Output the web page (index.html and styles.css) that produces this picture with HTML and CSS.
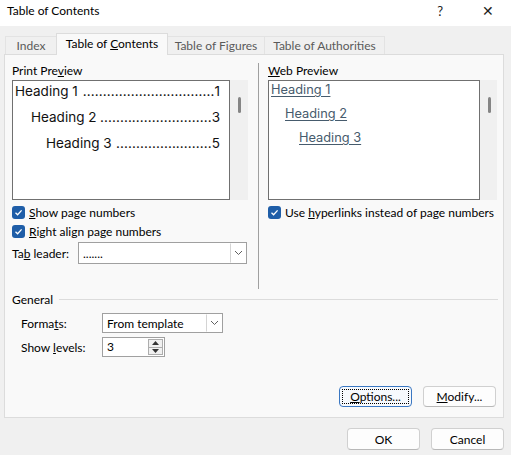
FILE: index.html
```html
<!DOCTYPE html>
<html lang="en">
<head>
    <meta charset="UTF-8">
    <title>Table of Contents</title>
    <link rel="stylesheet" href="styles.css">
</head>
<body>
    <div class="dialog">
        <div class="titlebar">
            <span class="title">Table of Contents</span>
            <span class="title-btn help">?</span>
            <span class="title-btn close">&#x2715;</span>
        </div>

        <div class="tabs">
            <div class="tab tab-index">Index</div>
            <div class="tab tab-active">Table of <u>C</u>ontents</div>
            <div class="tab tab-figures">Table of Figures</div>
            <div class="tab tab-auth">Table of Authorities</div>
        </div>

        <div class="panel">
            <div class="top-row">
                <!-- 인쇄 미리보기 -->
                <div class="col col-left">
                    <div class="label">Print Pre<u>v</u>iew</div>
                    <div class="preview-wrap">
                        <div class="preview print">
                            <div class="toc-line lvl1"><span>Heading 1</span><span class="dots">.................................</span><span>1</span></div>
                            <div class="toc-line lvl2"><span>Heading 2</span><span class="dots">............................</span><span>3</span></div>
                            <div class="toc-line lvl3"><span>Heading 3</span><span class="dots">........................</span><span>5</span></div>
                        </div>
                        <div class="scroll"><div class="thumb"></div></div>
                    </div>
                    <div class="check-row first">
                        <span class="check"><svg width="13" height="13" viewBox="0 0 13 13"><polyline points="3.5,6.8 5.6,8.8 9.6,4.4" fill="none" stroke="#fff" stroke-width="1.3"/></svg></span>
                        <span><u>S</u>how page numbers</span>
                    </div>
                    <div class="check-row">
                        <span class="check"><svg width="13" height="13" viewBox="0 0 13 13"><polyline points="3.5,6.8 5.6,8.8 9.6,4.4" fill="none" stroke="#fff" stroke-width="1.3"/></svg></span>
                        <span><u>R</u>ight align page numbers</span>
                    </div>
                    <div class="field-row leader-row">
                        <span class="leader-label">Ta<u>b</u> leader:</span>
                        <div class="select leader-select">
                            <span class="select-text">.......</span>
                            <span class="select-arrow"><svg width="9" height="6" viewBox="0 0 9 6"><polyline points="1,1 4.5,4.5 8,1" fill="none" stroke="#606060" stroke-width="1"/></svg></span>
                        </div>
                    </div>
                </div>

                <div class="vsep"></div>

                <!-- 웹 미리보기 -->
                <div class="col col-right">
                    <div class="label"><u>W</u>eb Preview</div>
                    <div class="preview-wrap">
                        <div class="preview web">
                            <div class="web-line lvl1">Heading 1</div>
                            <div class="web-line lvl2">Heading 2</div>
                            <div class="web-line lvl3">Heading 3</div>
                        </div>
                        <div class="scroll"><div class="thumb"></div></div>
                    </div>
                    <div class="check-row first">
                        <span class="check"><svg width="13" height="13" viewBox="0 0 13 13"><polyline points="3.5,6.8 5.6,8.8 9.6,4.4" fill="none" stroke="#fff" stroke-width="1.3"/></svg></span>
                        <span>Use <u>h</u>yperlinks instead of page numbers</span>
                    </div>
                </div>
            </div>

            <div class="group-head">
                <span>General</span>
                <div class="group-line"></div>
            </div>

            <div class="field-row formats-row">
                <span class="field-label">Forma<u>t</u>s:</span>
                <div class="select formats-select">
                    <span class="select-text">From template</span>
                    <span class="select-arrow"><svg width="9" height="6" viewBox="0 0 9 6"><polyline points="1,1 4.5,4.5 8,1" fill="none" stroke="#606060" stroke-width="1"/></svg></span>
                </div>
            </div>

            <div class="field-row levels-row">
                <span class="field-label">Show <u>l</u>evels:</span>
                <div class="spin">
                    <span class="spin-text">3</span>
                    <span class="spin-btns">
                        <span class="spin-btn"><svg width="7" height="4" viewBox="0 0 7 4"><polygon points="0,4 3.5,0 7,4" fill="#333"/></svg></span>
                        <span class="spin-btn"><svg width="7" height="4" viewBox="0 0 7 4"><polygon points="0,0 3.5,4 7,0" fill="#333"/></svg></span>
                    </span>
                </div>
            </div>

            <div class="btn-row">
                <button class="btn btn-focus"><span class="focus-ring"><u>O</u>ptions...</span></button>
                <button class="btn"><u>M</u>odify...</button>
            </div>
        </div>

        <div class="footer">
            <button class="btn btn-big">OK</button>
            <button class="btn btn-big">Cancel</button>
        </div>
    </div>
</body>
</html>
```

FILE: styles.css
```css
/* 전체 */
body {
    margin: 0;
    font-family: Lato, "Noto Sans", sans-serif;
    font-size: 12px;
    color: #000;
}

.dialog {
    width: 511px;
    height: 455px;
    background: #f0f0f0;
    overflow: hidden;
}

/* 타이틀 바 */
.titlebar {
    height: 26px;
    background: #fff;
    display: flex;
    align-items: center;
}

.title {
    margin-left: 7px;
    font-size: 12px;
    flex: 1;
    padding-bottom: 5px;
}

.title-btn {
    font-size: 13px;
    color: #222;
    padding-bottom: 5px;
}

.help {
    margin-right: 39px;
}

.close {
    margin-right: 17px;
    font-size: 14px;
}

/* 탭 */
.tabs {
    margin-top: 7px;
    margin-left: 5px;
    height: 21px;
    display: flex;
    align-items: flex-end;
}

.tab {
    box-sizing: border-box;
    height: 18px;
    border: 1px solid #e3e3e3;
    border-bottom: none;
    color: #5a5a5a;
    text-align: center;
    line-height: 17px;
}

.tab-index { width: 51px; border-right: none; }
.tab-figures { width: 97px; border-left: none; }
.tab-auth { width: 120px; border-left: none; }

.tab-active {
    width: 112px;
    height: 22px;
    margin-bottom: -1px;
    background: #f9f9f9;
    border-color: #dcdcdc;
    color: #000;
    line-height: 20px;
    position: relative;
    z-index: 1;
}

/* 탭 패널 */
.panel {
    box-sizing: border-box;
    margin-left: 4px;
    width: 500px;
    height: 364px;
    background: #f9f9f9;
    border: 1px solid #dcdcdc;
}

.top-row {
    margin-top: 8px;
    height: 226px;
    display: flex;
}

.col-left {
    margin-left: 7px;
    width: 236px;
}

.vsep {
    margin-left: 10px;
    width: 1px;
    background: #a0a0a0;
}

.col-right {
    margin-left: 9px;
    width: 229px;
}

.label {
    height: 17px;
    line-height: 16px;
}

.preview-wrap {
    height: 120px;
    display: flex;
}

.preview {
    box-sizing: border-box;
    flex: 1;
    min-width: 0;
    height: 120px;
    background: #fff;
    border: 1px solid #707070;
    font-family: Inter, "Noto Sans", sans-serif;
}

.scroll {
    width: 18px;
    background: #f0f0f0;
    position: relative;
}

.thumb {
    position: absolute;
    left: 8px;
    top: 17px;
    width: 3px;
    height: 16px;
    border-radius: 2px;
    background: #858585;
}

.col-right .scroll {
    width: 17px;
}

/* 인쇄 미리보기 줄 */
.print {
    padding: 2px 9px 0 2px;
    font-size: 13.5px;
}

.toc-line {
    display: flex;
    height: 16px;
    line-height: 16px;
    margin-bottom: 10px;
    white-space: nowrap;
    color: #111;
}

.toc-line .dots {
    flex: 1;
    text-align: right;
    letter-spacing: 0.1px;
}

.toc-line.lvl2 { padding-left: 16px; }
.toc-line.lvl3 { padding-left: 31px; }

/* 웹 미리보기 줄 */
.web {
    padding: 1px 0 0 2px;
    font-size: 12.8px;
}

.web-line {
    height: 16px;
    line-height: 16px;
    margin-bottom: 8px;
    color: #465b6d;
    text-decoration: underline;
    text-underline-offset: 2px;
}

.web-line.lvl2 { padding-left: 14px; }
.web-line.lvl3 { padding-left: 28px; }

/* 체크박스 */
.check-row {
    height: 19px;
    display: flex;
    align-items: center;
    white-space: nowrap;
}

.check-row.first {
    margin-top: 3px;
}

.check {
    width: 13px;
    height: 13px;
    border-radius: 3px;
    background: #1f5ea8;
    margin-right: 4px;
    display: flex;
    flex-shrink: 0;
}

/* 입력 필드 */
.field-row {
    display: flex;
    align-items: center;
}

.leader-row {
    margin-top: 1px;
    height: 22px;
}

.leader-label {
    width: 66px;
}

.select {
    box-sizing: border-box;
    height: 100%;
    background: #fff;
    border: 1px solid #a0a0a0;
    display: flex;
    align-items: center;
}

.leader-select {
    width: 169px;
}

.select-text {
    flex: 1;
    padding-left: 4px;
}

.select-arrow {
    box-sizing: border-box;
    width: 16px;
    height: 100%;
    border: 1px solid #d4d4d4;
    border-right: none;
    border-top-color: #fff;
    border-bottom-color: #fff;
    display: flex;
    align-items: center;
    justify-content: center;
}

/* 일반 그룹 */
.group-head {
    margin-top: 2px;
    margin-left: 7px;
    margin-right: 5px;
    height: 16px;
    display: flex;
    align-items: center;
}

.group-line {
    flex: 1;
    height: 1px;
    background: #dcdcdc;
    margin-left: 6px;
}

.formats-row {
    margin-top: 6px;
    margin-left: 16px;
    height: 20px;
}

.levels-row {
    margin-top: 4px;
    margin-left: 16px;
    height: 20px;
}

.field-label {
    width: 81px;
}

.formats-select {
    width: 121px;
}

.spin {
    box-sizing: border-box;
    width: 63px;
    height: 100%;
    background: #fff;
    border: 1px solid #a0a0a0;
    display: flex;
}

.spin-text {
    flex: 1;
    padding-left: 4px;
    line-height: 18px;
}

.spin-btns {
    width: 15px;
    display: flex;
    flex-direction: column;
    padding: 1px 1px 1px 0;
}

.spin-btn {
    flex: 1;
    border: 1px solid #adadad;
    background: #f0f0f0;
    display: flex;
    align-items: center;
    justify-content: center;
}

.spin-btn + .spin-btn {
    border-top: none;
}

/* 버튼 */
.btn-row {
    margin-top: 29px;
    margin-right: 7px;
    display: flex;
    justify-content: flex-end;
    gap: 11px;
}

.btn {
    box-sizing: border-box;
    width: 73px;
    height: 21px;
    padding: 0;
    font-family: inherit;
    font-size: 12px;
    color: #000;
    background: #fdfdfd;
    border: 1px solid #d0d0d0;
    border-bottom-color: #b8b8b8;
    border-radius: 4px;
}

.btn-focus {
    border: 1px solid #3a77c2;
    background: #f6f9fd;
    padding: 2px;
}

.focus-ring {
    display: block;
    height: 100%;
    box-sizing: border-box;
    border: 1px dotted #000;
    line-height: 13px;
}

.footer {
    margin-top: 10px;
    margin-right: 7px;
    display: flex;
    justify-content: flex-end;
    gap: 11px;
}

.btn-big {
    height: 22px;
}
```
